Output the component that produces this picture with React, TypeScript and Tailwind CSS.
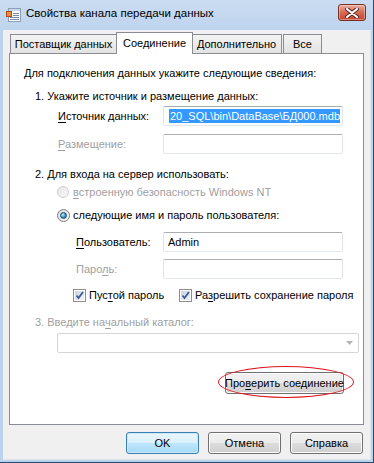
import React from "react";

const U = ({ children }: { children: React.ReactNode }) => <span className="underline underline-offset-2">{children}</span>;

function TitleIcon() {
  return (
    <svg width="16" height="16" viewBox="0 0 16 16" className="block">
      <rect x="2.5" y="1.5" width="12" height="13" fill="#fff" stroke="#8c9fb8" />
      <rect x="3" y="2" width="11" height="2" fill="#c9d7ea" />
      <rect x="0.5" y="4.5" width="5" height="5" fill="#f08a3c" stroke="#b04a20" />
      <rect x="7" y="6" width="6" height="1" fill="#7a8aa8" />
      <rect x="7" y="8" width="6" height="1" fill="#7a8aa8" />
      <rect x="4" y="10" width="9" height="1" fill="#7a8aa8" />
      <rect x="4" y="12" width="9" height="1" fill="#7a8aa8" />
    </svg>
  );
}

function CloseBtn() {
  return (
    <div className="w-[28px] h-[17px] rounded-[3px] border border-[#7b2f24] bg-gradient-to-b from-[#e8b0a6] via-[#d46a55] to-[#c4452e] flex items-center justify-center shadow-[inset_0_0_0_1px_rgba(255,255,255,0.35)]">
      <svg width="14" height="10" viewBox="0 0 14 10">
        <path d="M2 1 L12 9 M12 1 L2 9" stroke="#5a2018" strokeWidth="4" strokeLinecap="round" />
        <path d="M2 1 L12 9 M12 1 L2 9" stroke="#fff" strokeWidth="2.2" strokeLinecap="round" />
      </svg>
    </div>
  );
}

function Input({ children, className = "" }: { children?: React.ReactNode; className?: string }) {
  return (
    <div className={`h-[20px] w-[180px] bg-white border border-[#abadb3] border-l-[#e2e3ea] border-r-[#e2e3ea] border-b-[#e3e9ef] rounded-[2px] flex items-center overflow-hidden ${className}`}>
      {children}
    </div>
  );
}

function Radio({ checked, disabled }: { checked?: boolean; disabled?: boolean }) {
  if (disabled) {
    return <div className="w-[12px] h-[12px] rounded-full border border-[#cfcfcf] bg-gradient-to-br from-[#e6e6e6] to-[#f8f8f8]" />;
  }
  return (
    <div className="w-[13px] h-[13px] rounded-full border border-[#7d7d7d] bg-gradient-to-br from-[#dcdcdc] to-[#fbfbfb] flex items-center justify-center">
      {checked && <div className="w-[7px] h-[7px] rounded-full border border-[#1a4b6e] bg-[radial-gradient(circle_at_35%_35%,#b8f0ff,#2e8fc4_60%,#1a5a86)]" />}
    </div>
  );
}

function Checkbox() {
  return (
    <div className="w-[13px] h-[13px] border border-[#8e8f8f] bg-white p-[1px] shrink-0">
      <div className="w-full h-full bg-gradient-to-br from-[#cbd3dc] to-[#f2f5f8] relative">
        <svg width="11" height="11" viewBox="0 0 11 11" className="absolute -left-[1px] -top-[1px]">
          <path d="M2.5 5.5 L4.5 8 L9 2" fill="none" stroke="#3a5a9e" strokeWidth="1.8" />
        </svg>
      </div>
    </div>
  );
}

function Btn({ children, def, className = "" }: { children: React.ReactNode; def?: boolean; className?: string }) {
  return (
    <div
      className={`h-[22px] rounded-[3px] border flex items-center justify-center text-black ${
        def
          ? "border-[#3c7fb1] bg-[linear-gradient(#eaf6fd_0%,#d9f0fc_50%,#bee6fd_50%,#a7d9f5_100%)] shadow-[inset_0_0_0_1px_#c8e8fb]"
          : "border-[#707070] bg-[linear-gradient(#f2f2f2_0%,#ebebeb_50%,#dddddd_50%,#cfcfcf_100%)] shadow-[inset_0_0_0_1px_#fcfcfc]"
      } ${className}`}
    >
      {children}
    </div>
  );
}

export default function App() {
  return (
    <div className="w-[374px] h-[463px] flex flex-col bg-[#bcd3ee] font-['Liberation_Sans',Arial,sans-serif] text-[11px] text-black leading-none whitespace-nowrap overflow-hidden border-r border-b border-[#2b4a6e]">
      {/* Title bar */}
      <div className="h-[30px] flex items-start bg-gradient-to-b from-[#cadcf1] to-[#bed4ee] pl-[6px] pr-[7px] shrink-0">
        <div className="mt-[7px]">
          <TitleIcon />
        </div>
        <div className="ml-[4px] mt-[8px] text-[11.5px] text-black">Свойства канала передачи данных</div>
        <div className="ml-auto mt-[4px]">
          <CloseBtn />
        </div>
      </div>
      {/* Client */}
      <div className="flex-1 ml-[3px] mr-[2px] mb-[2px] bg-[#f0f0f0] border-r border-b border-[#dfe6ee] flex flex-col">
        {/* Tabs */}
        <div className="h-[22px] flex items-end pl-[7px] mt-[1px]">
          <div className="h-[19px] w-[107px] border border-b-0 border-[#898c95] bg-gradient-to-b from-[#f3f3f3] to-[#e3e3e3] flex items-center justify-center">Поставщик данных</div>
          <div className="h-[22px] w-[77px] -mx-[1px] border border-b-0 border-[#898c95] bg-white flex items-center justify-center relative z-10 mb-[-1px] pb-[1px]">Соединение</div>
          <div className="h-[19px] w-[90px] border border-b-0 border-l-0 border-[#898c95] bg-gradient-to-b from-[#f3f3f3] to-[#e3e3e3] flex items-center justify-center">Дополнительно</div>
          <div className="h-[19px] w-[39px] ml-[1px] border border-b-0 border-[#898c95] bg-gradient-to-b from-[#f3f3f3] to-[#e3e3e3] flex items-center justify-center">Все</div>
        </div>
        {/* Panel */}
        <div className="ml-[6px] w-[355px] h-[372px] border border-[#898c95] bg-white flex flex-col">
          <div className="h-[18px] mt-[10px] pl-[14px] flex items-center">Для подключения данных укажите следующие сведения:</div>
          <div className="h-[18px] mt-[5px] pl-[25px] flex items-center">1. Укажите источник и размещение данных:</div>
          <div className="h-[20px] mt-[1px] pl-[48px] flex items-center">
            <div className="w-[105px]"><U>И</U>сточник данных:</div>
            <Input className="justify-end pr-[2px]">
              <span className="bg-[#3399ff] text-white h-[14px] flex items-center whitespace-nowrap pl-[1px]">20_SQL\bin\DataBase\БД000.mdb</span>
            </Input>
          </div>
          <div className="h-[20px] mt-[8px] pl-[48px] flex items-center">
            <div className="w-[105px] text-[#a0a0a0]"><U>Р</U>азмещение:</div>
            <Input />
          </div>
          <div className="h-[18px] mt-[11px] pl-[25px] flex items-center">2. Для входа на сервер использовать:</div>
          <div className="h-[18px] mt-[0px] pl-[47px] flex items-center gap-[4px]">
            <Radio disabled />
            <span className="text-[#a0a0a0]"><U>в</U>строенную безопасность Windows NT</span>
          </div>
          <div className="h-[18px] mt-[5px] pl-[47px] flex items-center gap-[3px]">
            <Radio checked />
            <span>сле<U>д</U>ующие имя и пароль пользователя:</span>
          </div>
          <div className="h-[20px] mt-[8px] pl-[66px] flex items-center">
            <div className="w-[87px]"><U>П</U>ользователь:</div>
            <Input className="pl-[4px]">Admin</Input>
          </div>
          <div className="h-[20px] mt-[7px] pl-[66px] flex items-center">
            <div className="w-[87px] text-[#a0a0a0]">Паро<U>л</U>ь:</div>
            <Input />
          </div>
          <div className="h-[18px] mt-[7px] pl-[63px] flex items-center">
            <Checkbox />
            <span className="ml-[3px] w-[90px]">Пус<U>т</U>ой пароль</span>
            <Checkbox />
            <span className="ml-[3px]">Ра<U>з</U>решить сохранение пароля</span>
          </div>
          <div className="h-[18px] mt-[9px] pl-[25px] flex items-center text-[#a0a0a0]">3. Введите на<U>ч</U>альный каталог:</div>
          <div className="h-[20px] mt-[2px] ml-[47px] w-[302px] border border-[#d5d5d5] rounded-[2px] bg-white flex items-center justify-end pr-[5px]">
            <svg width="7" height="4" viewBox="0 0 7 4"><path d="M0 0 H7 L3.5 4 Z" fill="#b4b4b4" /></svg>
          </div>
          <div className="flex justify-end mr-[19px] mt-[19px]">
            <div className="relative">
              <Btn className="w-[119px] h-[21px]">Про<U>в</U>ерить соединение</Btn>
              <div className="absolute -left-[7px] -right-[10px] -top-[6px] -bottom-[4px] rounded-[50%] border border-[#e0141e]" />
            </div>
          </div>
        </div>
        {/* Buttons */}
        <div className="flex justify-end gap-[9px] pr-[7px] mt-[7px]">
          <Btn def className="w-[73px]">OK</Btn>
          <Btn className="w-[73px]">Отмена</Btn>
          <Btn className="w-[73px]">Справка</Btn>
        </div>
      </div>
    </div>
  );
}
